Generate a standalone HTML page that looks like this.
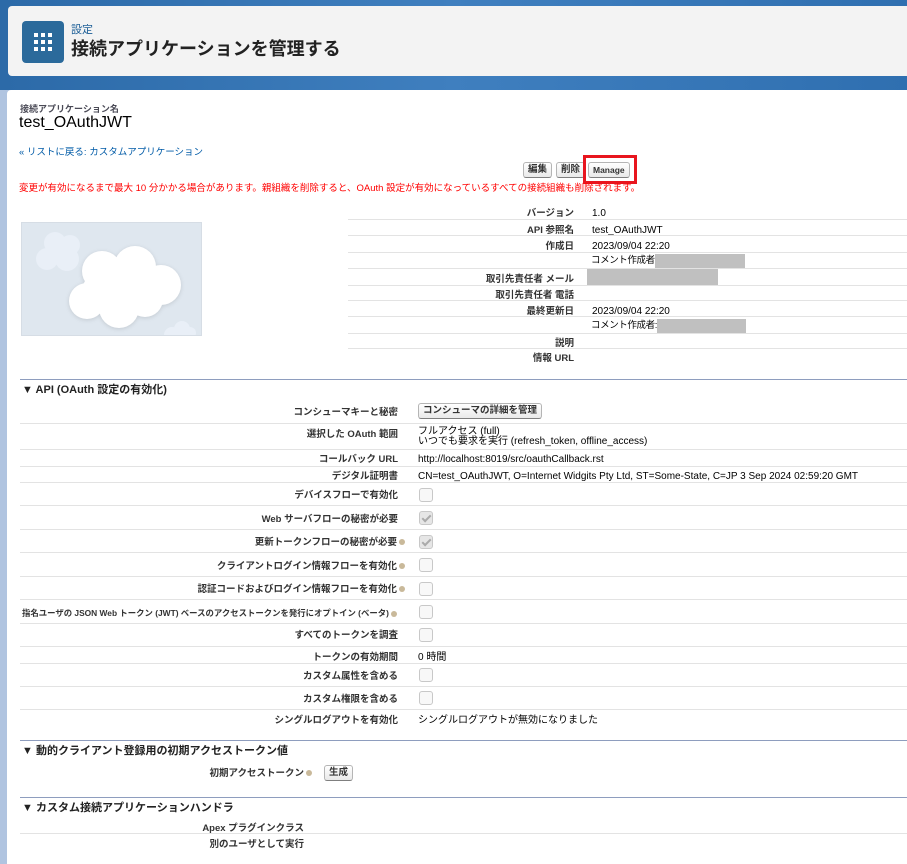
<!DOCTYPE html>
<html><head><meta charset="utf-8"><style>
body{margin:0;width:907px;height:864px;overflow:hidden;position:relative;background:#b0c4e0;font-family:"Liberation Sans","Noto Sans CJK JP",sans-serif;font-size:10px;line-height:16px;color:#000}
.a{position:absolute;white-space:nowrap}
.v{margin-top:3px}
.lb{position:absolute;white-space:nowrap;font-weight:bold;color:#333;text-align:right;font-size:9.5px;line-height:16px;margin-top:3px}
.ln{position:absolute;height:1px;background:#e3e3e3}
.sl{position:absolute;height:1px;background:#8e9dbe;left:20px;right:0}
.cb{position:absolute;left:419px;width:12px;height:12px;border:1px solid #c8c8c8;border-radius:3px;background:#f8f8f8}
.cb.ck{background:#e6e6e6}
.cb.ck:after{content:"";position:absolute;left:4px;top:1px;width:3px;height:7px;border:solid #aaa;border-width:0 2px 2px 0;transform:rotate(45deg)}
.btn{position:absolute;border:1px solid #b5b5b5;border-bottom-color:#7f7f7f;border-radius:3px;background:linear-gradient(#fff,#e9e9e9);font-weight:bold;font-size:9.5px;color:#333;padding:1px 4px;line-height:12px}
.h{position:absolute;left:22px;font-weight:bold;font-size:11px;color:#222;white-space:nowrap;line-height:17px;margin-top:2px}
.q{display:inline-block;width:6px;height:6px;border-radius:50%;background:#c9b99a;margin-left:2px;vertical-align:middle}
.cm{font-size:9.5px;letter-spacing:-0.4px;display:flex;align-items:center}
.gr{display:inline-block;height:15px;background:#c0c0c0}
</style></head><body>
<div class="a" style="left:0;top:0;width:907px;height:90px;background:linear-gradient(90deg,#2c6aa8,#3f7fbf 50%,#2f6fb0)"></div>
<div class="a" style="left:8px;top:6px;width:899px;height:70px;background:#f3f3f3;border-radius:4px 0 0 4px"></div>
<div class="a" style="left:22px;top:21px;width:42px;height:42px;background:#2b6a9b;border-radius:4px"></div>
<svg class="a" style="left:34px;top:33px" width="18" height="18"><g fill="#fff"><rect x="0" y="0" width="4" height="4"/><rect x="7" y="0" width="4" height="4"/><rect x="14" y="0" width="4" height="4"/><rect x="0" y="7" width="4" height="4"/><rect x="7" y="7" width="4" height="4"/><rect x="14" y="7" width="4" height="4"/><rect x="0" y="14" width="4" height="4"/><rect x="7" y="14" width="4" height="4"/><rect x="14" y="14" width="4" height="4"/></g></svg>
<div class="a" style="left:71px;top:23px;font-size:11px;line-height:14px;color:#1a5d96">設定</div>
<div class="a" style="left:71px;top:37px;font-size:18px;line-height:24px;font-weight:bold;color:#222">接続アプリケーションを管理する</div>
<div class="a" style="left:7px;top:90px;width:900px;height:774px;background:#fff;border-radius:4px 0 0 0"></div>

<div class="a" style="left:20px;top:103px;font-size:9px;line-height:12px;font-weight:bold;color:#4a4a56">接続アプリケーション名</div>
<div class="a" style="left:19px;top:114px;font-size:16px;line-height:18px;color:#000">test_OAuthJWT</div>
<div class="a" style="left:19px;top:146px;font-size:9.5px;line-height:14px;color:#015ba7">« リストに戻る: カスタムアプリケーション</div>
<div class="btn" style="left:523px;top:162px">編集</div>
<div class="btn" style="left:556px;top:162px">削除</div>
<div class="a" style="left:583px;top:155px;width:48px;height:23px;border:3px solid #e8151e"></div>
<div class="btn" style="left:588px;top:162px;font-size:8.5px">Manage</div>
<div class="a" style="left:19px;top:182px;font-size:9.5px;line-height:14px;color:#f00">変更が有効になるまで最大 10 分かかる場合があります。親組織を削除すると、OAuth 設定が有効になっているすべての接続組織も削除されます。</div>

<div class="a" style="left:21px;top:222px;width:179px;height:112px;background:#dfe7ef;border:1px solid #d6dde5;overflow:hidden">
<svg width="180" height="112"><g fill="#e9eff7"><circle cx="33" cy="20" r="11"/><circle cx="48" cy="22" r="10"/><circle cx="25" cy="36" r="11"/><circle cx="45" cy="36" r="12"/><circle cx="160" cy="106" r="8"/><circle cx="150" cy="112" r="8"/><circle cx="168" cy="110" r="6"/></g>
<g fill="#fff" style="filter:drop-shadow(0 1px 2px rgba(0,0,0,.12))"><circle cx="80" cy="48" r="20"/><circle cx="113" cy="44" r="21"/><circle cx="139" cy="62" r="20"/><circle cx="65" cy="78" r="18"/><circle cx="97" cy="85" r="20"/><circle cx="123" cy="76" r="18"/><circle cx="95" cy="65" r="25"/><circle cx="78" cy="68" r="18"/><circle cx="118" cy="62" r="22"/></g></svg></div>

<div class="lb" style="right:333px;top:203px">バージョン</div><div class="a v" style="left:592px;top:203px">1.0</div>
<div class="lb" style="right:333px;top:220px">API 参照名</div><div class="a v" style="left:592px;top:220px">test_OAuthJWT</div>
<div class="lb" style="right:333px;top:236px">作成日</div><div class="a v" style="left:592px;top:236px">2023/09/04 22:20</div>
<div class="a cm" style="left:591px;top:253px">コメント作成者<span class="gr" style="width:90px"></span></div>
<div class="lb" style="right:333px;top:269px">取引先責任者 メール</div><div class="a" style="left:587px;top:269px;width:131px;height:17px;background:#c0c0c0"></div>
<div class="lb" style="right:333px;top:285px">取引先責任者 電話</div>
<div class="lb" style="right:333px;top:301px">最終更新日</div><div class="a v" style="left:592px;top:301px">2023/09/04 22:20</div>
<div class="a cm" style="left:591px;top:318px">コメント作成者:<span class="gr" style="width:89px"></span></div>
<div class="lb" style="right:333px;top:333px">説明</div>
<div class="lb" style="right:333px;top:348px">情報 URL</div>
<div class="ln" style="left:348px;right:0;top:219px"></div><div class="ln" style="left:348px;right:0;top:235px"></div><div class="ln" style="left:348px;right:0;top:252px"></div><div class="ln" style="left:348px;right:0;top:268px"></div><div class="ln" style="left:348px;right:0;top:285px"></div><div class="ln" style="left:348px;right:0;top:300px"></div><div class="ln" style="left:348px;right:0;top:316px"></div><div class="ln" style="left:348px;right:0;top:333px"></div><div class="ln" style="left:348px;right:0;top:348px"></div>

<div class="sl" style="top:379px"></div>
<div class="h" style="top:380px">▼ API (OAuth 設定の有効化)</div>
<div class="lb" style="right:509px;top:402px">コンシューマキーと秘密</div><div class="btn" style="left:418px;top:403px">コンシューマの詳細を管理</div>
<div class="lb" style="right:509px;top:424px">選択した OAuth 範囲</div><div class="a" style="left:418px;top:427px;line-height:10px">フルアクセス (full)<br>いつでも要求を実行 (refresh_token, offline_access)</div>
<div class="lb" style="right:509px;top:449px">コールバック URL</div><div class="a v" style="left:418px;top:449px">http://localhost:8019/src/oauthCallback.rst</div>
<div class="lb" style="right:509px;top:466px">デジタル証明書</div><div class="a v" style="left:418px;top:466px">CN=test_OAuthJWT, O=Internet Widgits Pty Ltd, ST=Some-State, C=JP 3 Sep 2024 02:59:20 GMT</div>
<div class="lb" style="right:509px;top:485px">デバイスフローで有効化</div><div class="cb" style="top:488px"></div>
<div class="lb" style="right:509px;top:509px">Web サーバフローの秘密が必要</div><div class="cb ck" style="top:511px"></div>
<div class="lb" style="right:502px;top:532px">更新トークンフローの秘密が必要<span class="q"></span></div><div class="cb ck" style="top:535px"></div>
<div class="lb" style="right:502px;top:556px">クライアントログイン情報フローを有効化<span class="q"></span></div><div class="cb" style="top:558px"></div>
<div class="lb" style="right:502px;top:579px">認証コードおよびログイン情報フローを有効化<span class="q"></span></div><div class="cb" style="top:582px"></div>
<div class="lb" style="left:22px;top:602px;font-size:8.4px">指名ユーザの JSON Web トークン (JWT) ベースのアクセストークンを発行にオプトイン (ベータ)<span class="q"></span></div><div class="cb" style="top:605px"></div>
<div class="lb" style="right:509px;top:625px">すべてのトークンを調査</div><div class="cb" style="top:628px"></div>
<div class="lb" style="right:509px;top:647px">トークンの有効期間</div><div class="a v" style="left:418px;top:647px">0 時間</div>
<div class="lb" style="right:509px;top:666px">カスタム属性を含める</div><div class="cb" style="top:668px"></div>
<div class="lb" style="right:509px;top:689px">カスタム権限を含める</div><div class="cb" style="top:691px"></div>
<div class="lb" style="right:509px;top:710px">シングルログアウトを有効化</div><div class="a v" style="left:418px;top:710px">シングルログアウトが無効になりました</div>
<div class="ln" style="left:20px;right:0;top:423px"></div><div class="ln" style="left:20px;right:0;top:449px"></div><div class="ln" style="left:20px;right:0;top:466px"></div><div class="ln" style="left:20px;right:0;top:482px"></div><div class="ln" style="left:20px;right:0;top:505px"></div><div class="ln" style="left:20px;right:0;top:529px"></div><div class="ln" style="left:20px;right:0;top:552px"></div><div class="ln" style="left:20px;right:0;top:576px"></div><div class="ln" style="left:20px;right:0;top:599px"></div><div class="ln" style="left:20px;right:0;top:623px"></div><div class="ln" style="left:20px;right:0;top:646px"></div><div class="ln" style="left:20px;right:0;top:663px"></div><div class="ln" style="left:20px;right:0;top:686px"></div><div class="ln" style="left:20px;right:0;top:709px"></div>

<div class="sl" style="top:740px"></div>
<div class="h" style="top:741px">▼ 動的クライアント登録用の初期アクセストークン値</div>
<div class="lb" style="right:595px;top:763px">初期アクセストークン<span class="q"></span></div><div class="btn" style="left:324px;top:765px">生成</div>

<div class="sl" style="top:797px"></div>
<div class="h" style="top:798px">▼ カスタム接続アプリケーションハンドラ</div>
<div class="lb" style="right:603px;top:818px">Apex プラグインクラス</div>
<div class="ln" style="left:20px;right:0;top:833px"></div>
<div class="lb" style="right:603px;top:834px">別のユーザとして実行</div>
</body></html>
